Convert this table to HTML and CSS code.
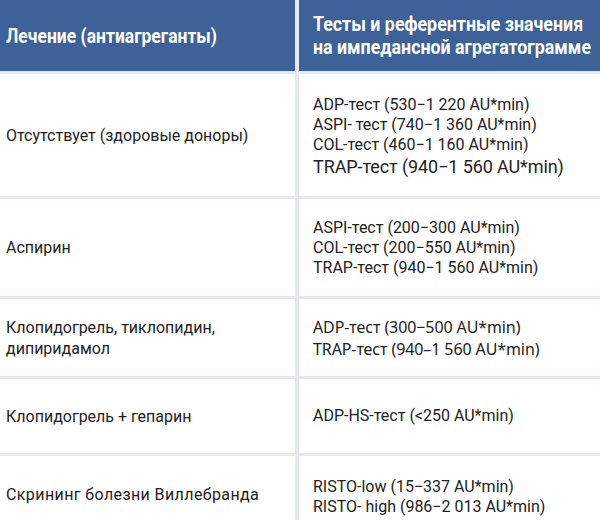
FILE: index.html
```html
<!DOCTYPE html>
<html lang="ru">
<head>
<meta charset="utf-8">
<link rel="stylesheet" href="styles.css">
</head>
<body>
<div class="table">
  <div class="cell head"><div class="h1">Лечение (антиагреганты)</div></div>
  <div class="cell head"><div class="h2">Тесты и референтные значения<br>на импедансной агрегатограмме</div></div>

  <div class="cell r1"><div class="l">Отсутствует (здоровые доноры)</div></div>
  <div class="cell r1"><div class="r">ADP-тест (530−1 220 AU*min)<br>ASPI- тест (740−1 360 AU*min)<br>COL-тест (460−1 160 AU*min)<br><span class="big">TRAP-тест (940−1 560 AU*min)</span></div></div>

  <div class="cell r2"><div class="l">Аспирин</div></div>
  <div class="cell r2"><div class="r">ASPI-тест (200−300 AU*min)<br>COL-тест (200−550 AU*min)<br>TRAP-тест (940−1 560 AU*min)</div></div>

  <div class="cell r3"><div class="l">Клопидогрель, тиклопидин,<br>дипиридамол</div></div>
  <div class="cell r3"><div class="r alt">ADP-тест (300−500 AU*min)<br>TRAP-тест (940–1 560 AU*min)</div></div>

  <div class="cell r4"><div class="l">Клопидогрель + гепарин</div></div>
  <div class="cell r4"><div class="r">ADP-HS-тест (&lt;250 AU*min)</div></div>

  <div class="cell r5"><div class="l wide">Скрининг болезни Виллебранда</div></div>
  <div class="cell r5"><div class="r">RISTO-low (15−337 AU*min)<br>RISTO- high (986−2 013 AU*min)</div></div>
</div>
</body>
</html>
```
FILE: styles.css
```css
html, body {
  margin: 0;
  padding: 0;
  background: #ffffff;
}
.table {
  width: 600px;
  height: 520px;
  overflow: hidden;
  display: grid;
  grid-template-columns: 295px 301px;
  grid-template-rows: 71px 122px 97px 77px 74px 80px;
  column-gap: 4px;
  row-gap: 3px;
  background: #e6e9f0;
  font-family: Roboto, "Liberation Sans", sans-serif;
  color: #222222;
}
.cell {
  background: #ffffff;
  display: flex;
  align-items: center;
}
.cell.head {
  background: #3d6199;
  color: #ffffff;
  font-weight: 700;
}
.h1 {
  margin-left: 6px;
  font-size: 20px;
  white-space: nowrap;
  transform: scaleX(0.875);
  transform-origin: left center;
}
.h2 {
  margin-left: 14px;
  font-size: 20px;
  line-height: 23px;
  white-space: nowrap;
  transform: scaleX(0.89);
  transform-origin: left center;
}
.l {
  padding-left: 6px;
  font-size: 16px;
  line-height: 21px;
  letter-spacing: 0;
}
.l.wide {
  letter-spacing: 0.4px;
}
.r {
  padding-left: 14px;
  font-size: 16px;
  line-height: 20px;
  letter-spacing: 0;
  white-space: nowrap;
}
.r.alt {
  font-family: "Noto Sans", Roboto, sans-serif;
  font-size: 16px;
  line-height: 22px;
  letter-spacing: -0.1px;
}
.r1 .r {
  padding-top: 4px;
}
.big {
  font-size: 18px;
  line-height: 24px;
  letter-spacing: -0.1px;
}
.r5 {
  align-items: flex-start;
}
.r5 .l {
  padding-top: 28px;
}
.r5 .r {
  padding-top: 21px;
}
```
